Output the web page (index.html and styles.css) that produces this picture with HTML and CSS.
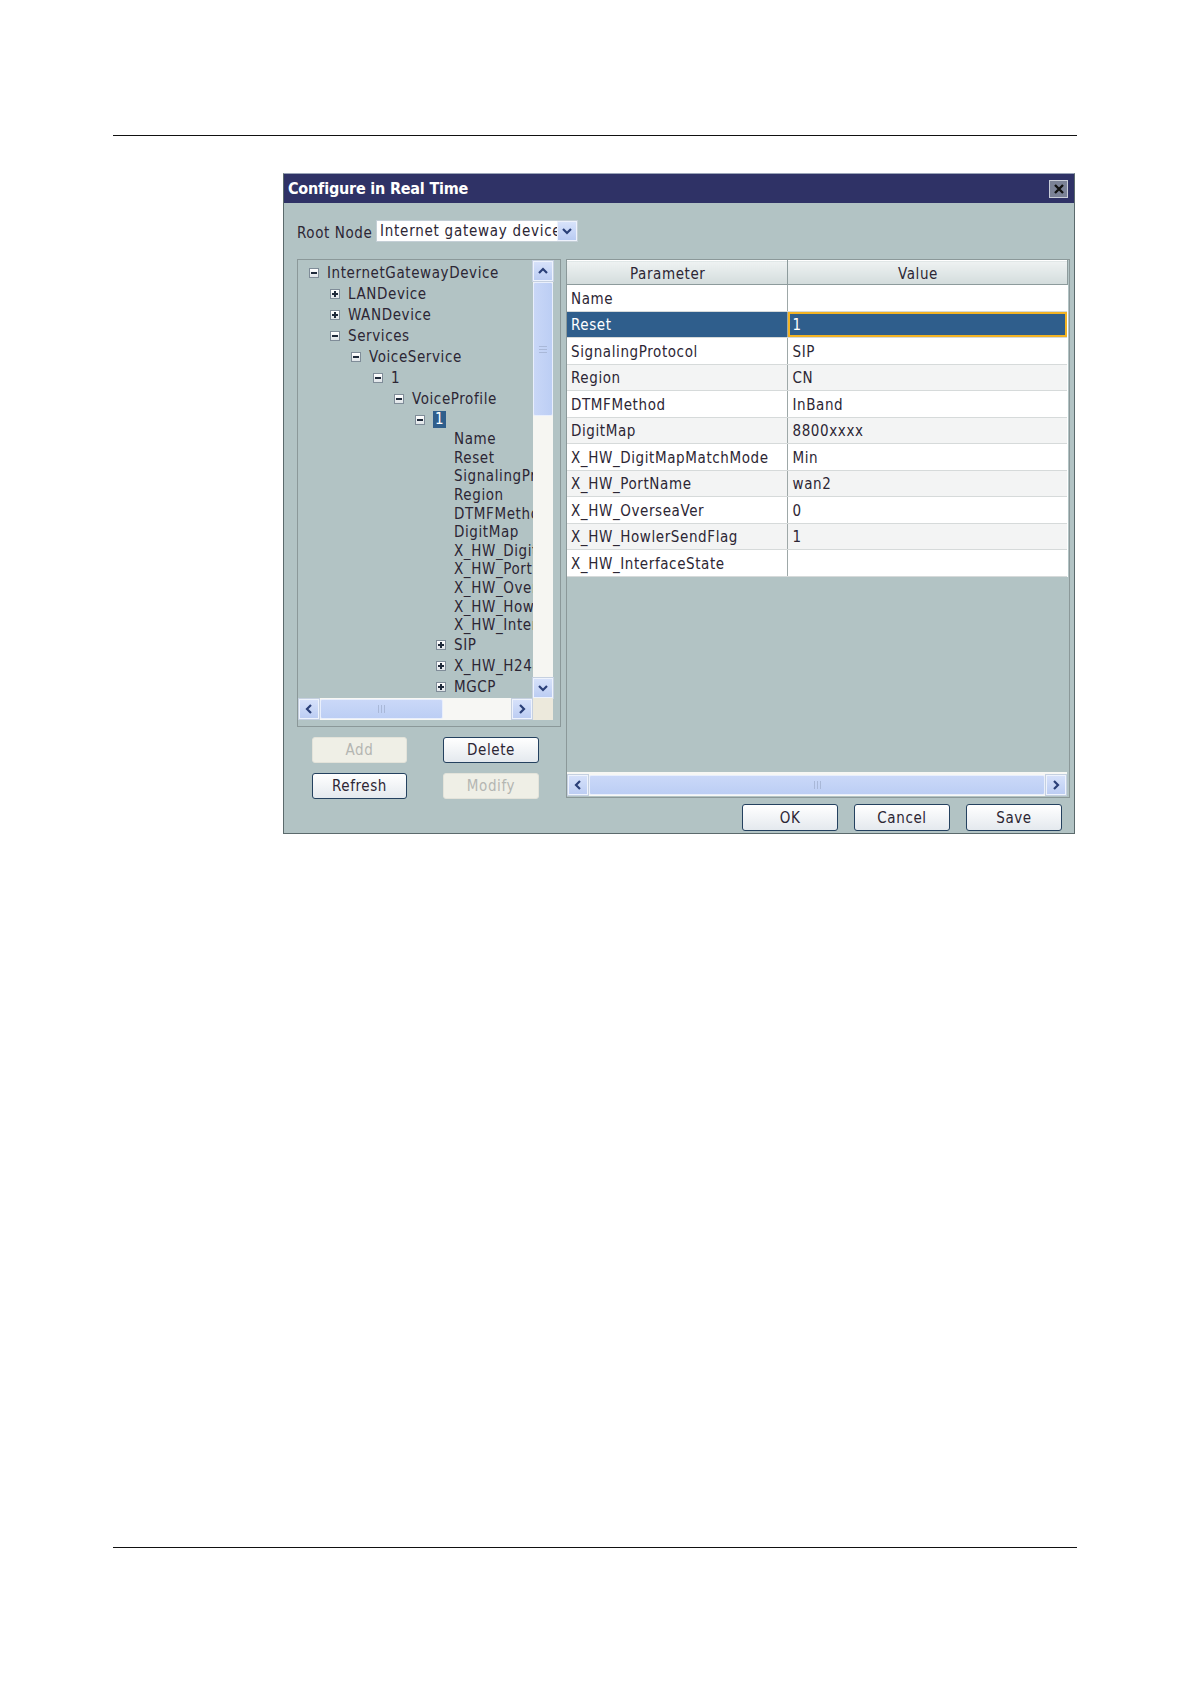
FILE: index.html
```html
<!DOCTYPE html>
<html>
<head>
<meta charset="utf-8">
<title>Configure in Real Time</title>
<link rel="stylesheet" href="styles.css">
</head>
<body>
<div class="page">
  <div class="rule rule-top"></div>
  <div class="dialog">
    <div class="titlebar">
      <span class="title">Configure in Real Time</span>
      <span class="close">
        <svg width="12" height="12" viewBox="0 0 12 12"><path d="M2 2 L10 10 M10 2 L2 10" stroke="#111" stroke-width="2.4" fill="none"/></svg>
      </span>
    </div>
    <div class="body">
      <div class="rootrow">
        <span class="rootlabel">Root Node</span>
        <div class="combo">
          <span class="combotext">Internet gateway device</span>
          <span class="combobtn"><svg width="12" height="10" viewBox="0 0 12 10"><path d="M2 3 L6 7 L10 3" stroke="#2a3f78" stroke-width="2.2" fill="none"/></svg></span>
        </div>
      </div>
      <div class="main">
        <div class="leftcol">
          <div class="treepanel">
            <div class="treeview">
              <div class="treecontent">
                <div class="trow big l0"><span class="tog minus"></span><span class="tlabel">InternetGatewayDevice</span></div>
                <div class="trow big l1"><span class="tog plus"></span><span class="tlabel">LANDevice</span></div>
                <div class="trow big l1"><span class="tog plus"></span><span class="tlabel">WANDevice</span></div>
                <div class="trow big l1"><span class="tog minus"></span><span class="tlabel">Services</span></div>
                <div class="trow big l2"><span class="tog minus"></span><span class="tlabel">VoiceService</span></div>
                <div class="trow big l3"><span class="tog minus"></span><span class="tlabel">1</span></div>
                <div class="trow big l4"><span class="tog minus"></span><span class="tlabel">VoiceProfile</span></div>
                <div class="trow big l5"><span class="tog minus"></span><span class="tlabel sel">1</span></div>
                <div class="trow leaf l6"><span class="tlabel">Name</span></div>
                <div class="trow leaf l6"><span class="tlabel">Reset</span></div>
                <div class="trow leaf l6"><span class="tlabel">SignalingProtocol</span></div>
                <div class="trow leaf l6"><span class="tlabel">Region</span></div>
                <div class="trow leaf l6"><span class="tlabel">DTMFMethod</span></div>
                <div class="trow leaf l6"><span class="tlabel">DigitMap</span></div>
                <div class="trow leaf l6"><span class="tlabel">X_HW_DigitMapMatchMode</span></div>
                <div class="trow leaf l6"><span class="tlabel">X_HW_PortName</span></div>
                <div class="trow leaf l6"><span class="tlabel">X_HW_OverseaVer</span></div>
                <div class="trow leaf l6"><span class="tlabel">X_HW_HowlerSendFlag</span></div>
                <div class="trow leaf l6"><span class="tlabel">X_HW_InterfaceState</span></div>
                <div class="trow big l5b"><span class="tog plus"></span><span class="tlabel">SIP</span></div>
                <div class="trow big l5b"><span class="tog plus"></span><span class="tlabel">X_HW_H248</span></div>
                <div class="trow big l5b"><span class="tog plus"></span><span class="tlabel">MGCP</span></div>
              </div>
              <div class="vscroll">
                <span class="sbtn"><svg width="12" height="10" viewBox="0 0 12 10"><path d="M2 7 L6 3 L10 7" stroke="#2a3f78" stroke-width="2.2" fill="none"/></svg></span>
                <span class="vthumb"><span class="vgrip"></span></span>
                <span class="vtrack"></span>
                <span class="sbtn"><svg width="12" height="10" viewBox="0 0 12 10"><path d="M2 3 L6 7 L10 3" stroke="#2a3f78" stroke-width="2.2" fill="none"/></svg></span>
              </div>
              <div class="hscroll tree-h">
                <span class="sbtn"><svg width="10" height="12" viewBox="0 0 10 12"><path d="M7 2 L3 6 L7 10" stroke="#2a3f78" stroke-width="2.2" fill="none"/></svg></span>
                <span class="hthumb small"><span class="hgrip"></span></span>
                <span class="htrack"></span>
                <span class="sbtn"><svg width="10" height="12" viewBox="0 0 10 12"><path d="M3 2 L7 6 L3 10" stroke="#2a3f78" stroke-width="2.2" fill="none"/></svg></span>
              </div>
              <div class="corner"></div>
            </div>
          </div>
          <div class="btngrid">
            <button class="btn disabled">Add</button>
            <button class="btn">Delete</button>
            <button class="btn">Refresh</button>
            <button class="btn disabled">Modify</button>
          </div>
        </div>
        <div class="rightpanel">
          <table class="grid">
            <thead>
              <tr><th class="cparam">Parameter</th><th class="cvalue">Value</th></tr>
            </thead>
            <tbody>
              <tr><td>Name</td><td></td></tr>
              <tr class="selrow"><td>Reset</td><td class="editing">1</td></tr>
              <tr><td>SignalingProtocol</td><td>SIP</td></tr>
              <tr class="alt"><td>Region</td><td>CN</td></tr>
              <tr><td>DTMFMethod</td><td>InBand</td></tr>
              <tr class="alt"><td>DigitMap</td><td>8800xxxx</td></tr>
              <tr><td>X_HW_DigitMapMatchMode</td><td>Min</td></tr>
              <tr class="alt"><td>X_HW_PortName</td><td>wan2</td></tr>
              <tr><td>X_HW_OverseaVer</td><td>0</td></tr>
              <tr class="alt"><td>X_HW_HowlerSendFlag</td><td>1</td></tr>
              <tr><td>X_HW_InterfaceState</td><td></td></tr>
            </tbody>
          </table>
          <div class="spacer"></div>
          <div class="hscroll wide-h">
            <span class="sbtn"><svg width="10" height="12" viewBox="0 0 10 12"><path d="M7 2 L3 6 L7 10" stroke="#2a3f78" stroke-width="2.2" fill="none"/></svg></span>
            <span class="hthumb full"><span class="hgrip"></span></span>
            <span class="sbtn"><svg width="10" height="12" viewBox="0 0 10 12"><path d="M3 2 L7 6 L3 10" stroke="#2a3f78" stroke-width="2.2" fill="none"/></svg></span>
          </div>
        </div>
      </div>
      <div class="footer">
        <button class="btn fbtn">OK</button>
        <button class="btn fbtn">Cancel</button>
        <button class="btn fbtn">Save</button>
      </div>
    </div>
  </div>
  <div class="rule rule-bottom"></div>
</div>
</body>
</html>
```

FILE: styles.css
```css
* { box-sizing: border-box; }
html, body { margin: 0; padding: 0; background: #ffffff; }
body {
  font-family: "DejaVu Sans Condensed", "Liberation Sans", sans-serif;
  font-size: 15px;
  letter-spacing: 0.6px;
  color: #2c2634;
}
.page { width: 1191px; height: 1684px; padding-top: 135px; }
.rule { margin-left: 113px; width: 964px; height: 0; border-top: 1px solid #111; }
.rule-bottom { margin-top: 713px; }

.dialog {
  margin-top: 37px;
  margin-left: 283px;
  width: 792px;
  height: 661px;
  background: #b2c3c4;
  border: 1px solid #5b6a6c;
  border-top-color: #9aa4b8;
  display: flex;
  flex-direction: column;
}
.titlebar {
  height: 29px;
  background: #2f3266;
  display: flex;
  align-items: center;
  justify-content: space-between;
  padding: 0 6px 0 4px;
}
.title {
  font-weight: bold;
  font-size: 16px;
  color: #ffffff;
  letter-spacing: -0.2px;
}
.close {
  width: 19px;
  height: 18px;
  background: #7b8296;
  border: 1px solid #c9cdd8;
  display: flex;
  align-items: center;
  justify-content: center;
}

.body { flex: 1; padding: 17px 4px 0 13px; display: flex; flex-direction: column; }
.rootrow { display: flex; align-items: center; height: 22px; }
.rootlabel { width: 79px; padding-top: 3px; white-space: nowrap; }
.combo {
  width: 202px;
  height: 22px;
  background: #ffffff;
  border: 1px solid #c4cfd6;
  display: flex;
  align-items: center;
}
.combotext {
  flex: 1;
  overflow: hidden;
  white-space: nowrap;
  padding-left: 3px;
  letter-spacing: 0.75px;
}
.combobtn {
  width: 20px;
  height: 20px;
  background: linear-gradient(#d8e3fb, #b9cbf3);
  border: 1px solid #eef2fc;
  display: flex;
  align-items: center;
  justify-content: center;
  flex: none;
}

.main { display: flex; margin-top: 17px; gap: 5px; }
.leftcol { width: 264px; display: flex; flex-direction: column; }
.treepanel {
  height: 468px;
  border: 1px solid #8b9899;
  padding: 1px 7px 6px 0;
}
.treeview {
  display: grid;
  grid-template-columns: 235px 20px;
  grid-template-rows: 437px 22px;
}
.treecontent { overflow: hidden; padding-top: 1px; }
.trow { display: flex; align-items: center; white-space: nowrap; overflow: hidden; }
.trow.big { height: 21px; }
.trow.leaf { height: 18.6px; }
.l0 { padding-left: 11px; }
.l1 { padding-left: 32px; }
.l2 { padding-left: 53px; }
.l3 { padding-left: 75px; }
.l4 { padding-left: 96px; }
.l5 { padding-left: 117px; }
.l5b { padding-left: 138px; }
.l6 { padding-left: 156px; }
.tog {
  width: 10px;
  height: 10px;
  border: 1px solid #7f8c98;
  background: linear-gradient(#ffffff, #dfe4e8);
  margin-right: 8px;
  position: relative;
  flex: none;
}
.tog::before {
  content: "";
  position: absolute;
  left: 1px; top: 3px;
  width: 6px; height: 2px;
  background: #1f2a3a;
}
.tog.plus::after {
  content: "";
  position: absolute;
  left: 3px; top: 1px;
  width: 2px; height: 6px;
  background: #1f2a3a;
}
.tlabel { line-height: 17px; padding-top: 1px; }
.tlabel.sel {
  background: #2f5e8c;
  color: #ffffff;
  padding: 0 2px;
  line-height: 17px;
  letter-spacing: 0;
}

.sbtn {
  width: 20px;
  height: 20px;
  background: linear-gradient(#d6e1fa, #bccdf3);
  border: 1px solid #eef3fd;
  outline: 1px solid #c5d0e0;
  display: flex;
  align-items: center;
  justify-content: center;
  flex: none;
}
.vscroll {
  display: flex;
  flex-direction: column;
  background: #f6f6f2;
}
.vthumb {
  height: 134px;
  margin-top: 1px;
  background: linear-gradient(90deg, #c9d7f7, #bccef4);
  border: 1px solid #e9effc;
  border-radius: 2px;
  display: flex;
  align-items: center;
  justify-content: center;
}
.vgrip {
  width: 8px; height: 7px;
  border-top: 1px solid #a9b8d8;
  border-bottom: 1px solid #a9b8d8;
  position: relative;
}
.vgrip::after {
  content: ""; position: absolute; left: 0; top: 2px; width: 8px; height: 1px; background: #a9b8d8;
}
.vtrack { flex: 1; }
.hscroll {
  display: flex;
  align-items: center;
  background: #f7f7f4;
  height: 22px;
  padding: 1px;
}
.hthumb {
  height: 20px;
  margin-left: 1px;
  background: linear-gradient(#cad8f8, #bccef4);
  border: 1px solid #e9effc;
  border-radius: 2px;
  display: flex;
  align-items: center;
  justify-content: center;
}
.hthumb.small { width: 123px; }
.hthumb.full { flex: 1; margin-right: 1px; }
.hgrip {
  width: 7px; height: 8px;
  border-left: 1px solid #a9b8d8;
  border-right: 1px solid #a9b8d8;
  position: relative;
}
.hgrip::after {
  content: ""; position: absolute; top: 0; left: 2px; width: 1px; height: 8px; background: #a9b8d8;
}
.htrack { flex: 1; }
.corner { background: #ece9dc; }

.btngrid {
  display: grid;
  grid-template-columns: 95px 96px;
  column-gap: 36px;
  row-gap: 10px;
  padding: 10px 0 0 15px;
}
.btn {
  height: 26px;
  font-family: "DejaVu Sans Condensed", "Liberation Sans", sans-serif;
  font-size: 15px;
  letter-spacing: 0.6px;
  color: #2c2634;
  background: linear-gradient(#ffffff, #e4e9ee);
  border: 1px solid #24415f;
  border-radius: 3px;
  padding: 0;
}
.btn.disabled {
  background: #efefe6;
  border-color: #e3e3da;
  color: #b4b6b2;
}

.rightpanel {
  width: 504px;
  height: 539px;
  border: 1px solid #8b9899;
  display: flex;
  flex-direction: column;
  padding-right: 2px;
}
.grid {
  width: 500px;
  border-collapse: collapse;
  table-layout: fixed;
  background: #ffffff;
}
.grid th {
  height: 24px;
  font-weight: normal;
  text-align: center;
  background: linear-gradient(#eef2f2, #d3dcdc);
  border-right: 1px solid #8d9b9c;
  border-bottom: 1px solid #8d9b9c;
  border-top: 1px solid #ffffff;
  padding: 3px 18px 0 0;
}
.cparam { width: 220px; }
.cvalue { width: 280px; border-right: 2px solid #8d9b9c; }
.grid td {
  height: 26.5px;
  padding: 2px 0 0 5px;
  line-height: 18px;
  border-bottom: 1px solid #d6dada;
  white-space: nowrap;
  overflow: hidden;
}
.grid td:first-child { border-right: 1px solid #9ea8a8; padding-left: 4px; }
.grid tr.alt td { background: #f3f4f4; }
.grid tr.selrow td { background: #2f5e8c; color: #ffffff; }
.grid tr.selrow td.editing { box-shadow: inset 0 0 0 2px #f2b324; }
.spacer { flex: 1; }
.hscroll.wide-h { height: 24px; padding: 2px 1px 1px 1px; margin-bottom: 1px; }

.footer {
  display: flex;
  justify-content: flex-end;
  gap: 16px;
  padding: 5px 8px 0 0;
}
.fbtn { width: 96px; height: 27px; }
```
